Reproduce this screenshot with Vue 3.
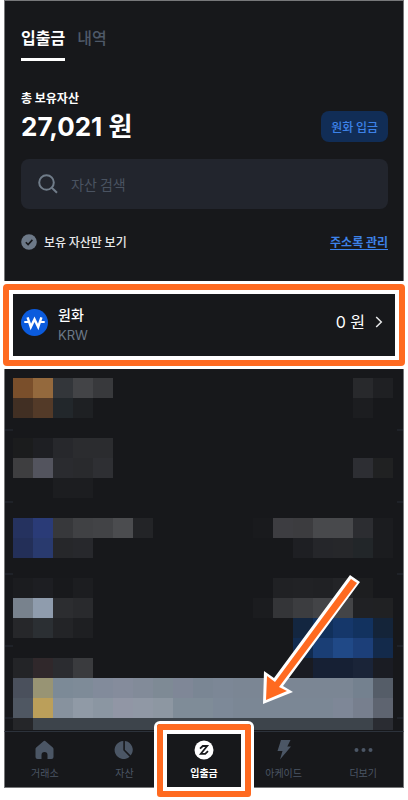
<script setup>
import { ref } from "vue";

const search = ref("");
const onlyOwned = ref(true);
const activeMenu = ref("transfer");

const menus = [
  { id: "exchange", label: "거래소" },
  { id: "assets", label: "자산" },
  { id: "transfer", label: "입출금" },
  { id: "arcade", label: "아케이드" },
  { id: "more", label: "더보기" },
];

// [row, first column, colors]
const runs = [
  [1, 1, "#7a4f2b #94693d #33363a #434447 #38393c"],
  [1, 18, "#28292c #1f2023"],
  [2, 1, "#412f23 #533a28 #22272b #1e2023"],
  [2, 18, "#1c1d20"],
  [4, 1, "#1b1c1d #1e1f23 #27282c #2b2c2f #2b2c2f"],
  [5, 1, "#3e3e40 #53545e #2a2b2f #292a2d #2e2f33"],
  [5, 18, "#2d2e33 #202122"],
  [6, 3, "#1c1d20 #1c1d20"],
  [8, 1, "#25325f #2a3b77 #37383b #404144 #424346 #4b4c4f #232427"],
  [8, 13, "#191a1d #3d3d41 #3c3c3f #48494c #48494c #2c2d31 #1b1c1f"],
  [9, 1, "#232f58 #293a6e #26272a #27282c"],
  [9, 15, "#1e1f23 #25262a #26272a #222629 #1b1c1f"],
  [11, 1, "#1b1c1f #1d1e22 #18191c #1c1d20"],
  [11, 14, "#202124 #212225 #202124 #232427 #1d1e20"],
  [12, 1, "#78828d #8f9cad #2c2d30 #292a2d"],
  [12, 13, "#1b1c1f #343538 #3c3d40 #434447 #434447 #202124 #202123"],
  [13, 1, "#26272a #2b2f33 #232427 #1e1f22"],
  [13, 15, "#132640 #11305b #15376a #12325f #142439"],
  [14, 15, "#112b50 #1a3e75 #204987 #1c3f79 #132a4b"],
  [15, 1, "#232427 #30282b #2b2c30 #3a3b3e"],
  [15, 15, "#191b22 #162034 #162034 #1a2438 #1a1c23"],
  [16, 1, "#4a505c #989474 #7c8a97 #7e8b98 #828b9b #858c9c #828b99 #7e8a95 #7f8797 #7a8694"],
  [16, 11, "#7c8796 #7b8694 #7b8694 #7b8694 #7b8694 #7b8694 #7b8694 #74818f #555d68"],
  [17, 1, "#4f5762 #bb9f5a #87929e #909aa6 #8b96a2 #9196a5 #9098a5 #8d97a2 #7f8c98 #7f8c98"],
  [17, 11, "#7d8998 #7b8795 #7b8795 #7b8795 #7b8795 #7b8795 #7e8797 #777f8e #5e6470"],
  [18, 1, "#252629 #3d444b #3d444b #3d444b #3d444b #3d444b #3d444b #3d444b #3d444b #3d444b"],
  [18, 11, "#3d444b #3d444b #3d444b #3d444b #3d444b #3d444b #3d444b #3d444b #2a2c32"],
];

const cells = runs.flatMap(([row, col, colors]) =>
  colors.split(" ").map((color, i) => ({ row, col: col + i, color }))
);
</script>

<template>
  <div class="page">
    <header class="panel top">
      <nav class="tabs">
        <button class="tab active">입출금</button>
        <button class="tab">내역</button>
      </nav>

      <div class="balance">
        <div>
          <p class="balance-label">총 보유자산</p>
          <p class="balance-value">27,021 원</p>
        </div>
        <button class="deposit">원화 입금</button>
      </div>

      <label class="search" for="search">
        <svg width="20" height="20" viewBox="0 0 20 20" fill="none" stroke="#707c89" stroke-width="2">
          <circle cx="8.5" cy="8.5" r="7.3" />
          <path d="M13.8 13.8 19 18.8" />
        </svg>
        <input id="search" v-model="search" type="text" placeholder="자산 검색" aria-label="자산 검색" />
      </label>

      <div class="filter">
        <label class="owned" for="owned">
          <input id="owned" v-model="onlyOwned" type="checkbox" />
          <svg class="check" width="16" height="16" viewBox="0 0 16 16" fill="none">
            <circle cx="8" cy="8" r="7.8" fill="#6d7988" />
            <path v-if="onlyOwned" d="M4.8 8.2 7.1 10.5 11.4 5.9" stroke="#17181b" stroke-width="1.6" />
          </svg>
          보유 자산만 보기
        </label>
        <a class="address" href="#">주소록 관리</a>
      </div>
    </header>

    <div class="highlight">
      <button class="currency">
        <svg width="27" height="27" viewBox="0 0 27 27" fill="none">
          <circle cx="13.5" cy="13.5" r="13.5" fill="#0b5bdd" />
          <path d="M3.3 13H8M19 13h4.7" stroke="#fff" stroke-width="2" />
          <path d="M6.6 8.4 9.8 18 13.5 10.3 17.2 18 20.4 8.4" stroke="#fff" stroke-width="2.4" />
        </svg>
        <span class="names">
          <span class="name">원화</span>
          <span class="code">KRW</span>
        </span>
        <span class="amount">0 원</span>
        <svg width="8" height="12" viewBox="0 0 8 12" fill="none" stroke="#e8e9ea" stroke-width="1.5">
          <path d="M1.2 1 6.3 6 1.2 11" />
        </svg>
      </button>
    </div>

    <main class="panel list">
      <div class="mosaic">
        <span
          v-for="cell in cells"
          :key="cell.row + '-' + cell.col"
          :style="{ gridRow: cell.row, gridColumn: cell.col, backgroundColor: cell.color }"
        ></span>
      </div>
      <svg class="arrow" width="104" height="136" viewBox="260 572 104 136">
        <polygon points="350,575 360,582 283,686 293,692 263,704 264,671 274,678" fill="#fff" />
        <polygon points="351,579 357,583 279,687 287,691 266,700 267,676 275,682" fill="#ff6a20" />
      </svg>
    </main>

    <nav class="panel menu">
      <button
        v-for="menu in menus"
        :key="menu.id"
        class="menu-item"
        :class="{ active: menu.id === activeMenu }"
        @click="activeMenu = menu.id"
      >
        <svg width="22" height="20" viewBox="0 0 22 20" fill="currentColor">
          <path
            v-if="menu.id === 'exchange'"
            d="M9.2 1.4a2 2 0 0 1 2.6 0l7 6.2a2 2 0 0 1 .7 1.500V17a2 2 0 0 1-2 2H13.500v-4a3 3 0 0 0-6 0V19H3.500a2 2 0 0 1-2-2V9.100a2 2 0 0 1 .7-1.500z"
          />
          <template v-else-if="menu.id === 'assets'">
            <path d="M10.3 1v9.3l6.3 6.4A9 9 0 1 1 10.3 1z" />
            <path d="M11.9 1A9 9 0 0 1 17.7 15.6L11.9 9.7z" />
          </template>
          <template v-else-if="menu.id === 'transfer'">
            <circle cx="11" cy="10" r="9.5" />
            <path
              d="M7 8.6 9.8 6H14.2L7.800 13.800H12.200L15 11.200"
              fill="none"
              stroke="#17181b"
              stroke-width="1.8"
            />
          </template>
          <path v-else-if="menu.id === 'arcade'" d="M8 0h9.5l-3.2 6.5H18L7 19.5 9.5 11H4.5z" />
          <template v-else>
            <circle cx="4.5" cy="10" r="2" />
            <circle cx="11.5" cy="10" r="2" />
            <circle cx="18.5" cy="10" r="2" />
          </template>
        </svg>
        <span>{{ menu.label }}</span>
      </button>
    </nav>
  </div>
</template>

<style>
body {
  background-color: #fff;
}
</style>

<style scoped>
.page {
  padding: 0 4px 12px;
  font-family: "Noto Sans CJK KR", sans-serif;
  color: #fff;
}

.page * {
  box-sizing: border-box;
}

button,
input {
  margin: 0;
  padding: 0;
  border: none;
  background: none;
  color: inherit;
  font-family: inherit;
}

button {
  cursor: pointer;
}

p {
  margin: 0;
}

svg {
  display: block;
  flex-shrink: 0;
}

.panel {
  background-color: #17181b;
  border: 0 solid #77787a;
  border-left-width: 1px;
  border-right-width: 1px;
}

.top {
  border-top-width: 1px;
  padding: 24px 15px 29px 16px;
}

/* onglets */
.tabs {
  display: flex;
  gap: 12px;
}

.tab {
  height: 36px;
  padding-bottom: 9px;
  border-bottom: 3px solid transparent;
  font-size: 16px;
  line-height: 24px;
  font-weight: 500;
  color: #4e5968;
}

.tab.active {
  border-bottom-color: #fff;
  font-weight: 700;
  color: #fff;
}

.balance {
  display: flex;
  justify-content: space-between;
  align-items: flex-end;
  margin-top: 28px;
}

.balance-label {
  font-size: 12px;
  line-height: 18px;
  font-weight: 700;
}

.balance-value {
  margin-top: 4px;
  font-family: Inter, "Noto Sans CJK KR", sans-serif;
  font-size: 26px;
  line-height: 32px;
  font-weight: 700;
}

.deposit {
  height: 31px;
  margin-bottom: 1px;
  padding: 0 10px;
  border-radius: 8px;
  background-color: #112d56;
  color: #3d82e8;
  font-size: 12px;
  font-weight: 500;
}

.search {
  display: flex;
  align-items: center;
  gap: 13px;
  height: 50px;
  margin-top: 16px;
  padding: 0 17px;
  border-radius: 8px;
  background-color: #22252d;
}

.search input {
  flex: 1;
  min-width: 0;
  font-size: 14px;
  outline: none;
}

.search input::placeholder {
  color: #4a5361;
  opacity: 1;
}

.filter {
  display: flex;
  justify-content: space-between;
  align-items: center;
  margin-top: 23px;
  font-size: 12px;
  line-height: 20px;
}

.owned {
  position: relative;
  display: flex;
  align-items: center;
  gap: 7px;
  font-weight: 500;
  color: #e8e9ea;
}

.owned input {
  position: absolute;
  width: 16px;
  height: 16px;
  opacity: 0;
}

.address {
  color: #3d82e8;
  font-weight: 700;
  text-decoration: underline;
  text-underline-offset: 2px;
}

/* ligne KRW */
.highlight {
  margin: 0 -1px;
  padding: 3px 0;
}

.currency {
  display: flex;
  align-items: center;
  width: 100%;
  height: 82px;
  padding: 0 16px 6px 12px;
  border: 6px solid #ff6a20;
  border-radius: 4px;
  background-color: #17181b;
  box-shadow: inset 0 0 0 4px #fff;
  font-family: Inter, "Noto Sans CJK KR", sans-serif;
  text-align: left;
}

.names {
  display: flex;
  flex-direction: column;
  flex: 1;
  margin: 5px 0 0 10px;
}

.name {
  font-size: 14px;
  line-height: 20px;
  font-weight: 500;
}

.code {
  font-size: 13px;
  line-height: 20px;
  color: #6d7988;
}

.amount {
  margin-right: 10px;
  font-size: 16px;
  line-height: 20px;
}

/* liste floutée */
.list {
  position: relative;
  padding: 0 6px 0 8px;
  background-image: repeating-linear-gradient(
    transparent 0 60px,
    #1f2228 60px 62px,
    transparent 62px 72px
  );
}

.mosaic {
  display: grid;
  grid-template-columns: repeat(19, 1fr);
  grid-template-rows: repeat(17, 20px) 12px;
  padding: 9px 4px 1px 0;
  background-color: #17181b;
}

.arrow {
  position: absolute;
  top: 203px;
  right: 39px;
}

.menu {
  display: grid;
  grid-template-columns: repeat(5, 1fr);
  border-top: 1px solid #2c323b;
  border-bottom-width: 1px;
}

.menu-item {
  position: relative;
  display: flex;
  flex-direction: column;
  align-items: center;
  gap: 6px;
  height: 55px;
  padding-top: 8px;
  color: #4b5665;
  font-size: 10px;
  line-height: 14px;
}

.menu-item.active {
  color: #fff;
  font-weight: 700;
}

/* cadre orange */
.menu-item.active::after {
  content: "";
  position: absolute;
  inset: -8px -7px -10px;
  border: 6px solid #ff6a20;
  border-radius: 3px;
  box-shadow: 0 0 0 3px #fff, inset 0 0 0 4px #fff;
}
</style>
